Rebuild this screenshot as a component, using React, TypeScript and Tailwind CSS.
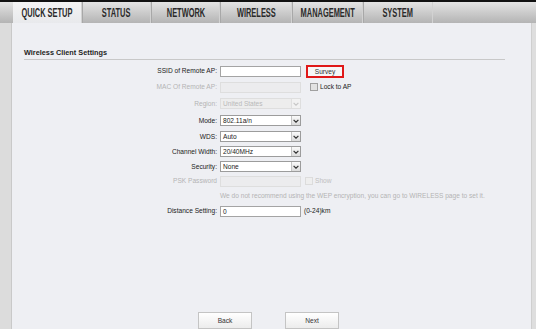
import React from "react"

const tabs = ["QUICK SETUP", "STATUS", "NETWORK", "WIRELESS", "MANAGEMENT", "SYSTEM"]
const tabWidths = ["w-[69px]", "w-[69px]", "w-[69px]", "w-[72px]", "w-[71px]", "w-[70px]"]

const font = "font-['Liberation_Sans',Arial,sans-serif]"

function Chevron({ dim }: { dim?: boolean }) {
  return (
    <span
      className={`flex h-full w-[9px] items-center justify-center border-l ${
        dim ? "border-[#e0e0e0] bg-[#f2f2f2]" : "border-[#c4c4c4] bg-gradient-to-b from-[#fafafa] to-[#dcdcdc]"
      }`}
    >
      <svg width="6" height="4" viewBox="0 0 6 4">
        <path d="M0.6 0.8 L3 3.2 L5.4 0.8" fill="none" stroke={dim ? "#c8c8c8" : "#333"} strokeWidth="1.2" />
      </svg>
    </span>
  )
}

function Select({ value, dim }: { value: string; dim?: boolean }) {
  return (
    <div
      className={`flex h-[11px] w-[81px] items-stretch border ${
        dim ? "border-[#dedede] bg-[#ededed] text-[#b9b9b9]" : "border-[#9c9c9c] bg-white text-[#222]"
      }`}
    >
      <span className="flex-1 pl-[2px] leading-[9px]">{value}</span>
      <Chevron dim={dim} />
    </div>
  )
}

function TextBox({ value, dim }: { value?: string; dim?: boolean }) {
  return (
    <div
      className={`h-[11px] w-[81px] border pl-[2px] leading-[9px] ${
        dim ? "border-[#dedede] bg-[#ececee]" : "border-[#a4a4a4] bg-white text-[#222]"
      }`}
    >
      {value}
    </div>
  )
}

function Row({
  label,
  dim,
  h,
  children,
}: {
  label?: string
  dim?: boolean
  h: string
  children: React.ReactNode
}) {
  return (
    <div className={`flex items-center ${h}`}>
      <div className={`w-[208px] shrink-0 pr-[3px] text-right ${dim ? "text-[#b4b4b4]" : "text-[#222]"}`}>{label}</div>
      <div className="flex items-center">{children}</div>
    </div>
  )
}

function Check({ label, dim }: { label: string; dim?: boolean }) {
  return (
    <span className={`flex items-center gap-[2px] ${dim ? "text-[#c0c0c0]" : "text-[#222]"}`}>
      <span
        className={`h-[8px] w-[8px] border ${dim ? "border-[#dcdcdc] bg-[#eeeeee]" : "border-[#a0a0a0] bg-[#e2e2e2]"}`}
      />
      {label}
    </span>
  )
}

export default function App() {
  return (
    <div className={`flex h-[329px] w-[536px] flex-col overflow-hidden bg-[#dedede] ${font}`}>
      <div className="h-[2px] bg-[#111]" />
      <div className="flex h-[21px] bg-gradient-to-b from-[#e4e4e4] to-[#b4b4b4] pl-[13px]">
        {tabs.map((t, i) => (
          <div
            key={t}
            className={`flex items-center justify-center border-r border-[#d2d2d2] ${tabWidths[i]} ${
              i === 0 ? "bg-gradient-to-b from-[#f4f4f4] to-[#e8e9ec]" : "border-l border-l-[#a8a8a8]"
            }`}
          >
            <span className="inline-block scale-x-[0.62] whitespace-nowrap text-[12px] font-bold text-[#2a2a2a]">
              {t}
            </span>
          </div>
        ))}
      </div>
      <div className="flex flex-1">
        <div className="w-[12px] border-r border-[#c9c9c9] bg-[#dcdcdc]" />
        <div className="flex flex-1 flex-col bg-[#eeeff3] text-[6.6px]">
          <div className="mt-[25px] ml-[12px] mr-[26px] border-b border-[#c8c8c8] pb-[2px] text-[7.3px] leading-[9px] font-bold text-[#1e1e1e]">
            Wireless Client Settings
          </div>
          <div className="mt-[3px] flex flex-col">
            <Row label="SSID of Remote AP:" h="h-[16px]">
              <TextBox />
              <button className="ml-[5px] h-[13px] w-[38px] border-2 border-[#e01818] bg-[#f7f7f7] text-[6.6px] leading-[9px] text-[#333]">
                Survey
              </button>
            </Row>
            <Row label="MAC Of Remote AP:" dim h="h-[16px]">
              <TextBox dim />
              <span className="ml-[9px]">
                <Check label="Lock to AP" />
              </span>
            </Row>
            <Row label="Region:" dim h="h-[17px]">
              <Select value="United States" dim />
            </Row>
            <Row label="Mode:" h="h-[17px]">
              <Select value="802.11a/n" />
            </Row>
            <Row label="WDS:" h="h-[15px]">
              <Select value="Auto" />
            </Row>
            <Row label="Channel Width:" h="h-[15px]">
              <Select value="20/40MHz" />
            </Row>
            <Row label="Security:" h="h-[15px]">
              <Select value="None" />
            </Row>
            <Row label="PSK Password" dim h="h-[14px]">
              <TextBox dim />
              <span className="ml-[4px]">
                <Check label="Show" dim />
              </span>
            </Row>
            <Row h="h-[15px]">
              <span className="whitespace-nowrap text-[#b4b4b4]">
                We do not recommend using the WEP encryption, you can go to WIRELESS page to set it.
              </span>
            </Row>
            <Row label="Distance Setting:" h="h-[16px]">
              <TextBox value="0" />
              <span className="ml-[3px] text-[#222]">(0-24)km</span>
            </Row>
          </div>
          <div className="mt-auto flex gap-[33px] pl-[186px]">
            <button className="h-[17px] w-[54px] border border-[#c4c4c4] bg-gradient-to-b from-white to-[#ececec] text-[6.6px] text-[#333]">
              Back
            </button>
            <button className="h-[17px] w-[54px] border border-[#c4c4c4] bg-gradient-to-b from-white to-[#ececec] text-[6.6px] text-[#333]">
              Next
            </button>
          </div>
        </div>
        <div className="w-[5px] border-l border-[#cfcfcf] bg-[#dedede]" />
      </div>
    </div>
  )
}
